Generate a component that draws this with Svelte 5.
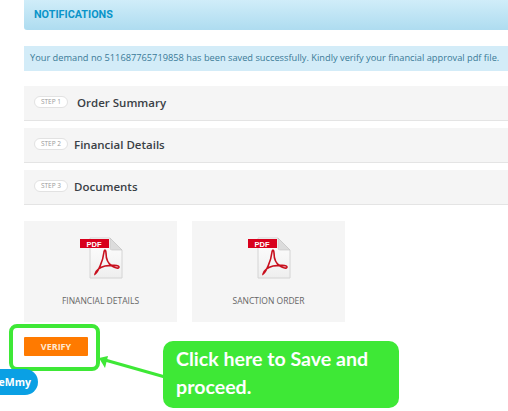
<script>
	let steps = [
		{ n: 1, title: "Order Summary" },
		{ n: 2, title: "Financial Details" },
		{ n: 3, title: "Documents" }
	];
	let docs = ["FINANCIAL DETAILS", "SANCTION ORDER"];
</script>

<div class="page">
	<div class="notif">NOTIFICATIONS</div>
	<div class="alert">Your demand no 511687765719858 has been saved successfully. Kindly verify your financial approval pdf file.</div>

	<div class="steps">
		{#each steps as s}
			<div class="step">
				<span class="pill">STEP {s.n}</span>
				<span class="title" class:first={s.n === 1}>{s.title}</span>
			</div>
		{/each}
	</div>

	<div class="docs">
		{#each docs as d}
			<div class="doc">
				<svg width="44" height="42" viewBox="0 0 44 42">
					<defs>
						<linearGradient id="sheet" x1="0" y1="0" x2="0" y2="1">
							<stop offset="0" stop-color="#ffffff" />
							<stop offset="1" stop-color="#eeeeee" />
						</linearGradient>
					</defs>
					<path d="M11 1H31L43 13V41H11Z" fill="url(#sheet)" stroke="#d4d4d4" />
					<path d="M31 1L43 13H33Q31 13 31 11Z" fill="#dcdcdc" stroke="#c4c4c4" stroke-width="0.6" />
					<rect x="1" y="2" width="29" height="9" fill="#d8001c" />
					<text x="15" y="9.6" class="pdf" text-anchor="middle">PDF</text>
					<path d="M16 37C19 35 24 24 25 15C25.500 12 27 13 27 16C27 21 28 26 33 29C36 31 40 32 40 30C40 28 32 28 26 29C21 30 16 34 16 37Z" fill="none" stroke="#c8101e" stroke-width="1.6" />
				</svg>
				<div class="doc-label">{d}</div>
			</div>
		{/each}
	</div>

	<button class="verify">VERIFY</button>

	<!-- annotation layer -->
	<div class="ring"></div>
	<div class="badge">eMmy</div>
	<svg class="arrow" width="70" height="30" viewBox="0 0 70 30">
		<line x1="66" y1="21" x2="6" y2="4" stroke="#3ee836" stroke-width="3" />
		<path d="M0 2L9 0L6 12Z" fill="#3ee836" />
	</svg>
	<div class="callout">Click here to Save and proceed.</div>
</div>

<style>
	:global(body) {
		margin: 0;
		background: #fff;
	}
	.page {
		position: relative;
		width: 508px;
		height: 411px;
		overflow: hidden;
		padding-left: 24px;
		box-sizing: border-box;
		font-family: "Open Sans", sans-serif;
	}
	.notif {
		height: 30px;
		line-height: 29px;
		padding-left: 10px;
		background: linear-gradient(#d0edf9, #aedcf0);
		border-bottom-left-radius: 3px;
		font-family: Roboto, sans-serif;
		font-weight: 700;
		font-size: 10.8px;
		color: #0a94c9;
	}
	.alert {
		margin-top: 16px;
		height: 25px;
		line-height: 24px;
		padding-left: 6px;
		background: #d3ecf8;
		font-size: 9.25px;
		font-weight: 500;
		color: #3a7a97;
		white-space: nowrap;
	}
	.steps {
		margin-top: 15px;
		display: flex;
		flex-direction: column;
		gap: 7px;
	}
	.step {
		height: 32px;
		display: flex;
		align-items: center;
		padding-left: 10px;
		padding-bottom: 2px;
		background: #f5f5f5;
		border-bottom: 1px solid #e4e4e4;
	}
	.pill {
		width: 32px;
		height: 10px;
		line-height: 10px;
		text-align: center;
		border: 1px solid #e2e2e2;
		border-radius: 6px;
		background: #fff;
		font-size: 6.5px;
		color: #999;
	}
	.title {
		margin-left: 6px;
		font-size: 11.5px;
		font-weight: 600;
		color: #3a3f45;
	}
	.title.first {
		margin-left: 9px;
	}
	.docs {
		margin-top: 16px;
		display: flex;
		gap: 15px;
	}
	.doc {
		width: 153px;
		height: 101px;
		padding-top: 16px;
		box-sizing: border-box;
		background: #f5f5f5;
		display: flex;
		flex-direction: column;
		align-items: center;
	}
	.pdf {
		font-family: "Liberation Sans", sans-serif;
		font-weight: 700;
		font-size: 7.5px;
		fill: #fff;
	}
	.doc-label {
		margin-top: 16px;
		font-size: 8.5px;
		color: #666;
	}
	.verify {
		display: block;
		margin-top: 15px;
		width: 64px;
		height: 19px;
		padding: 0;
		border: none;
		border-radius: 1px;
		background: #ff7a00;
		color: #ffe9d2;
		font-family: "Open Sans", sans-serif;
		font-weight: 700;
		font-size: 9px;
	}
	.ring {
		position: absolute;
		left: 9px;
		top: 324px;
		width: 91px;
		height: 47px;
		box-sizing: border-box;
		border: 4px solid #3ee836;
		border-radius: 8px;
	}
	.badge {
		position: absolute;
		left: -14px;
		top: 369px;
		width: 52px;
		height: 26px;
		line-height: 26px;
		padding-right: 7px;
		box-sizing: border-box;
		text-align: right;
		border-radius: 13px;
		background: #0aa0e4;
		color: #fff;
		font-weight: 700;
		font-size: 10.5px;
	}
	.arrow {
		position: absolute;
		left: 99px;
		top: 356px;
		overflow: visible;
	}
	.callout {
		position: absolute;
		left: 163px;
		top: 341px;
		width: 236px;
		height: 67px;
		box-sizing: border-box;
		padding: 4px 13px;
		border-radius: 10px;
		background: #3ee836;
		color: #fff;
		font-family: Lato, sans-serif;
		font-weight: 700;
		font-size: 19.6px;
		line-height: 28px;
	}
</style>
